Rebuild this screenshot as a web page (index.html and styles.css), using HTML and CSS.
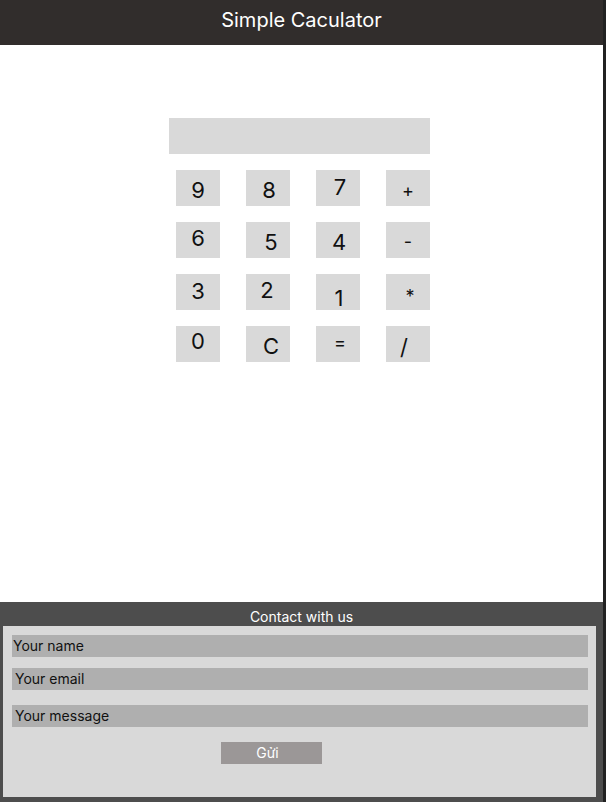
FILE: index.html
```html
<!DOCTYPE html>
<html lang="vi">
<head>
<meta charset="utf-8">
<title>Simple Caculator</title>
<link rel="stylesheet" href="styles.css">
</head>
<body>
<div class="page">
  <header class="topbar">
    <h1 class="title">Simple Caculator</h1>
  </header>
  <main class="main">
    <div class="calc">
      <div class="display"></div>
      <div class="keys">
        <button class="key">9</button>
        <button class="key">8</button>
        <button class="key">7</button>
        <button class="key">+</button>
        <button class="key">6</button>
        <button class="key">5</button>
        <button class="key">4</button>
        <button class="key">-</button>
        <button class="key">3</button>
        <button class="key">2</button>
        <button class="key">1</button>
        <button class="key">*</button>
        <button class="key">0</button>
        <button class="key">C</button>
        <button class="key">=</button>
        <button class="key">/</button>
      </div>
    </div>
  </main>
  <footer class="contact">
    <h2 class="contact-title">Contact with us</h2>
    <form class="contact-form">
      <input class="field field-name" type="text" placeholder="Your name">
      <input class="field field-email" type="text" placeholder="Your email">
      <input class="field field-message" type="text" placeholder="Your message">
      <button class="send" type="button">Gửi</button>
    </form>
  </footer>
</div>
</body>
</html>
```
FILE: styles.css
```css
* { box-sizing: border-box; }

html, body {
  margin: 0;
  padding: 0;
  background: #222222;
}

body {
  width: 606px;
  height: 802px;
  font-family: Inter, "Noto Sans", sans-serif;
  border-right: 3px solid #222222;
  overflow: hidden;
}

.page {
  display: flex;
  flex-direction: column;
  height: 802px;
  background: #ffffff;
}

.topbar {
  height: 45px;
  background: #312d2c;
  display: flex;
  align-items: center;
  justify-content: center;
  flex-shrink: 0;
}

.title {
  margin: 0 0 6px 0;
  font-size: 20px;
  font-weight: 400;
  color: #ffffff;
}

.main {
  flex: 1;
  background: #ffffff;
}

.calc {
  width: 261px;
  margin: 73px 0 0 169px;
}

.display {
  height: 36px;
  background: #d9d9d9;
}

.keys {
  display: grid;
  grid-template-columns: repeat(4, 44px);
  column-gap: 26px;
  row-gap: 16px;
  margin: 16px 0 0 7px;
}

.key {
  height: 36px;
  border: 0;
  padding: 0;
  background: #d9d9d9;
  font-family: Inter, "Noto Sans", sans-serif;
  font-size: 22px;
  line-height: 1;
  color: #111111;
  display: flex;
  align-items: center;
  justify-content: center;
}

/* individual glyph nudges, as in the mockup */
.key:nth-child(1)  { padding-top: 4px; }
.key:nth-child(2)  { padding-top: 4px; padding-left: 2px; }
.key:nth-child(3)  { padding-bottom: 2px; padding-left: 4px; }
.key:nth-child(4)  { padding-top: 6px; font-size: 18px; }
.key:nth-child(5)  { padding-bottom: 4px; }
.key:nth-child(6)  { padding-top: 4px; padding-left: 6px; }
.key:nth-child(7)  { padding-top: 4px; padding-left: 2px; }
.key:nth-child(8)  { padding-top: 4px; font-size: 18px; }
.key:nth-child(9)  { padding-bottom: 2px; }
.key:nth-child(10) { padding-bottom: 4px; padding-right: 2px; }
.key:nth-child(11) { padding-top: 12px; padding-left: 2px; }
.key:nth-child(12) { padding-top: 9px; padding-left: 4px; font-size: 18px; }
.key:nth-child(13) { padding-bottom: 6px; }
.key:nth-child(14) { padding-top: 4px; padding-left: 6px; }
.key:nth-child(15) { padding-bottom: 2px; padding-left: 4px; font-size: 18px; }
.key:nth-child(16) { padding-top: 6px; padding-right: 8px; }

.contact {
  height: 200px;
  flex-shrink: 0;
  background: #4d4d4d;
  display: flex;
  flex-direction: column;
}

.contact-title {
  margin: 0;
  height: 24px;
  padding-top: 6px;
  text-align: center;
  font-size: 14px;
  font-weight: 400;
  line-height: 17px;
  color: #ffffff;
}

.contact-form {
  margin: 0 7px 0 3px;
  height: 171px;
  background: #d9d9d9;
  display: flex;
  flex-direction: column;
  padding: 9px 8px 0 9px;
}

.field {
  height: 22px;
  border: 0;
  margin: 0;
  background: #afafaf;
  font-family: Inter, "Noto Sans", sans-serif;
  font-size: 14px;
  color: #111111;
  padding: 0 0 2px 3px;
  outline: none;
}

.field::placeholder {
  color: #111111;
  opacity: 1;
}

.field-name { padding-left: 1px; }
.field-email { margin-top: 11px; }
.field-message { margin-top: 15px; }

.send {
  align-self: flex-start;
  margin: 15px 0 0 209px;
  width: 101px;
  height: 22px;
  border: 0;
  padding: 0 8px 2px 0;
  background: #9b9797;
  color: #ffffff;
  font-family: Inter, "Noto Sans", sans-serif;
  font-size: 14px;
}
```
